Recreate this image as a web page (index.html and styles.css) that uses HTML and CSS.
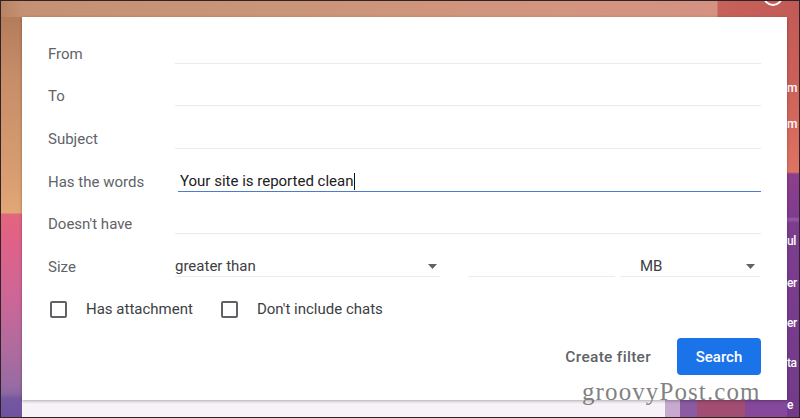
FILE: index.html
```html
<!DOCTYPE html>
<html lang="en">
<head>
<meta charset="utf-8">
<title>Search options</title>
<link rel="stylesheet" href="styles.css">
</head>
<body>
<div class="frame">
  <div class="top">
    <svg class="avatar" width="24" height="16" viewBox="0 0 24 16"><circle cx="12" cy="-5" r="9" fill="none" stroke="#fff" stroke-width="2"/></svg>
  </div>
  <div class="left"></div>
  <div class="dialog">
    <div class="row"><span class="label">From</span><div class="field"></div></div>
    <div class="row"><span class="label">To</span><div class="field"></div></div>
    <div class="row"><span class="label">Subject</span><div class="field"></div></div>
    <div class="row"><span class="label">Has the words</span><div class="field focused">Your site is reported clean<span class="caret"></span></div></div>
    <div class="row"><span class="label">Doesn't have</span><div class="field"></div></div>
    <div class="row"><span class="label">Size</span>
      <div class="size">
        <div class="field select"><span>greater than</span><svg class="arrow" width="9" height="5" viewBox="0 0 9 5"><polygon points="0,0 9,0 4.5,5" fill="#5f6368"/></svg></div>
        <div class="field num"></div>
        <div class="field select unit"><span>MB</span><svg class="arrow" width="9" height="5" viewBox="0 0 9 5"><polygon points="0,0 9,0 4.5,5" fill="#5f6368"/></svg></div>
      </div>
    </div>
    <div class="checks">
      <span class="cb"></span><span class="cblabel">Has attachment</span>
      <span class="cb second"></span><span class="cblabel">Don't include chats</span>
    </div>
    <div class="actions">
      <span class="create">Create filter</span>
      <span class="search">Search</span>
    </div>
  </div>
  <div class="right">
    <span class="t t1">m</span>
    <span class="t t2">m</span>
    <span class="t t3">ul</span>
    <span class="t t4">er</span>
    <span class="t t5">er</span>
    <span class="t t6">ta</span>
    <span class="t t7">e</span>
  </div>
  <div class="bottom"></div>
  <div class="watermark">groovyPost.com</div>
</div>
</body>
</html>
```

FILE: styles.css
```css
html, body {
  margin: 0;
  padding: 0;
  background: #fff;
}

.frame {
  position: relative;
  box-sizing: border-box;
  width: 800px;
  height: 418px;
  border: 1px solid #2e2326;
  display: grid;
  grid-template-columns: 21px 765px 1fr;
  grid-template-rows: 16px 383px 1fr;
  grid-template-areas:
    "top top top"
    "left dialog right"
    "left bottom right";
  overflow: hidden;
  font-family: Roboto, "Liberation Sans", Arial, sans-serif;
}

.top {
  grid-area: top;
  display: flex;
  justify-content: flex-end;
  background: linear-gradient(to right, #b98262 0, #c59074 21px, #cb957a 300px, #d2957f 560px, #d49282 716px, #c6625a 717px, #c35a55 100%);
}

.avatar {
  margin-right: 14px;
}

.left {
  grid-area: left;
  background: linear-gradient(to bottom, #b57c5c 0, #c68d68 60px, #d69c70 150px, #e1a775 196px, #e3657f 197px, #df6288 225px, #cd6696 280px, #b16b9e 330px, #976ba2 370px, #8a66a2 377px, #7558a0 381px, #6e52a0 100%);
}

.right {
  grid-area: right;
  display: flex;
  flex-direction: column;
  overflow: hidden;
  background: linear-gradient(to bottom, #c45b56 0, #ca6058 60px, #d86b5e 120px, #e07463 155px, #8d3f8c 157px, #7f3c8e 200px, #9a5aa6 202px, #7c3d8f 206px, #733a8c 100%);
}

.right .t {
  display: block;
  color: #fff;
  font-size: 12px;
  font-weight: 500;
  line-height: 16px;
  letter-spacing: -0.5px;
  white-space: nowrap;
}

.t1 { margin-top: 63px; }
.t2 { margin-top: 20px; }
.t3 { margin-top: 101px; }
.t4 { margin-top: 26px; }
.t5 { margin-top: 24px; }
.t6 { margin-top: 24px; }
.t7 { margin-top: 26px; }

.bottom {
  grid-area: bottom;
  background: linear-gradient(to right, #f6f2f7 0, #f6f2f7 643px, #c8aad0 643px, #c8aad0 658px, #8a5aa2 658px, #8a5aa2 675px, #a24e72 675px, #a24e72 723px, #86489a 723px);
}

.dialog {
  grid-area: dialog;
  position: relative;
  z-index: 1;
  background: #fff;
  box-shadow: 0 1px 3px rgba(0, 0, 0, 0.3);
  padding: 15.5px 26px 0 26px;
  display: flex;
  flex-direction: column;
}

.row {
  display: grid;
  grid-template-columns: 127px 1fr;
  align-items: center;
  height: 42.6px;
}

.label {
  font-size: 15px;
  color: #5f6368;
}

.field {
  box-sizing: border-box;
  height: 20px;
  line-height: 19px;
  border-bottom: 1px solid #ebebeb;
  font-size: 15px;
  color: #202124;
}

.field.focused {
  margin-left: 3px;
  padding-left: 2px;
  border-bottom-color: #4d7bcf;
}

.caret {
  display: inline-block;
  width: 1px;
  height: 17px;
  background: #111;
  vertical-align: -4px;
}

.size {
  display: flex;
}

.select {
  display: flex;
  align-items: center;
  justify-content: space-between;
  width: 265px;
  color: #3c4043;
  padding-right: 3px;
}

.num {
  width: 147px;
  margin-left: 28px;
}

.select.unit {
  width: 140px;
  margin-left: 5px;
  padding-left: 20px;
  padding-right: 5px;
}

.arrow {
  display: block;
}

.checks {
  display: flex;
  align-items: center;
  height: 42.6px;
}

.cb {
  box-sizing: border-box;
  width: 17px;
  height: 17px;
  border: 2px solid #5f6368;
  border-radius: 2px;
  margin-left: 2px;
}

.cb.second {
  margin-left: 28px;
}

.cblabel {
  margin-left: 19px;
  font-size: 15px;
  color: #3c4043;
}

.actions {
  display: flex;
  justify-content: flex-end;
  align-items: center;
  gap: 26px;
  margin-top: 7.5px;
}

.create {
  font-size: 15.5px;
  font-weight: 500;
  color: #5f6368;
  letter-spacing: 0.3px;
}

.search {
  display: flex;
  align-items: center;
  justify-content: center;
  width: 84px;
  height: 37px;
  border-radius: 4px;
  background: #1a73e8;
  color: #fff;
  font-size: 15px;
  font-weight: 500;
}

.watermark {
  position: absolute;
  z-index: 2;
  left: 581px;
  top: 378px;
  font-family: "Liberation Serif", "Times New Roman", serif;
  font-size: 25px;
  line-height: 25px;
  letter-spacing: 1.1px;
  color: rgba(95, 95, 95, 0.8);
  white-space: nowrap;
}
```
